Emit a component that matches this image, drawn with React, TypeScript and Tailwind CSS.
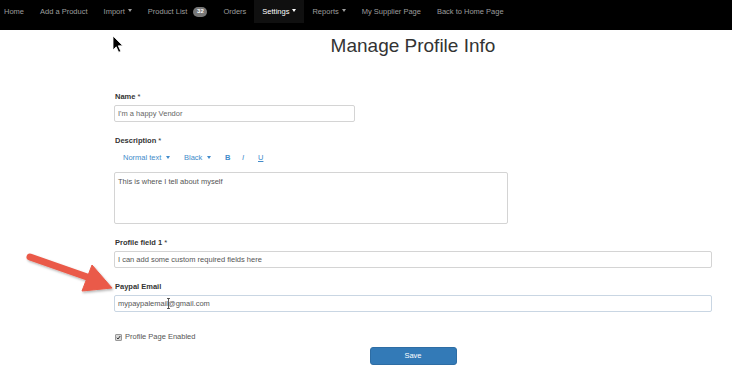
import React from "react";

const Caret = () => (
  <span className="inline-block w-0 h-0 border-t-[3px] border-t-current border-x-[2.5px] border-x-transparent align-middle ml-[3px] relative top-[-1px]" />
);

function NavItem({ children, active, first }: { children: React.ReactNode; active?: boolean; first?: boolean }) {
  return (
    <div
      className={
        "h-[23px] flex items-center " +
        (first ? "pl-[4px] pr-[8px] " : "px-[8px] ") +
        (active ? "bg-[#101010] text-white" : "text-[#9d9d9d]")
      }
    >
      {children}
    </div>
  );
}

function Label({ children, req }: { children: React.ReactNode; req?: boolean }) {
  return (
    <div className="h-[10px] leading-[10px] text-[7.5px] font-bold text-[#333] pl-[1px]">
      {children}
      {req && <span className="font-normal text-[#333]"> *</span>}
    </div>
  );
}

export default function App() {
  return (
    <div
      className="relative w-[732px] h-[378px] bg-white overflow-hidden"
      style={{ fontFamily: '"Liberation Sans", Arial, sans-serif' }}
    >
      {/* Navbar */}
      <nav className="h-[30px] bg-black flex items-start text-[7.5px]">
        <NavItem first>Home</NavItem>
        <NavItem>Add a Product</NavItem>
        <NavItem>
          Import <Caret />
        </NavItem>
        <NavItem>
          Product List
          <span className="ml-[6px] h-[10px] w-[14px] rounded-full bg-[#777] text-white text-[6px] font-bold flex items-center justify-center">
            32
          </span>
        </NavItem>
        <NavItem>Orders</NavItem>
        <NavItem active>
          Settings <Caret />
        </NavItem>
        <NavItem>
          Reports <Caret />
        </NavItem>
        <NavItem>My Supplier Page</NavItem>
        <NavItem>Back to Home Page</NavItem>
      </nav>

      {/* Form */}
      <div className="ml-[114px] w-[598px] flex flex-col">
        <h1 className="mt-[5px] h-[22px] leading-[22px] text-center text-[19px] text-[#333] font-normal">
          Manage Profile Info
        </h1>

        <div className="mt-[35px]">
          <Label req>Name</Label>
        </div>
        <div className="mt-[3px] w-[241px] h-[17px] border border-[#d4d4d4] rounded-[2px] flex items-center px-[3px] text-[7.5px] text-[#666]">
          I'm a happy Vendor
        </div>

        <div className="mt-[14px]">
          <Label req>Description</Label>
        </div>
        <div className="mt-[7px] h-[10px] flex items-center text-[7.5px] text-[#428bca] pl-[9px]">
          <span className="w-[61px]">
            Normal text <Caret />
          </span>
          <span className="w-[41px]">
            Black <Caret />
          </span>
          <span className="w-[17px] font-bold">B</span>
          <span className="w-[16px] italic">I</span>
          <span className="underline">U</span>
        </div>
        <div className="mt-[9px] w-[394px] h-[52px] border border-[#d4d4d4] rounded-[2px] px-[3px] pt-[3px] text-[7.5px] text-[#555]">
          This is where I tell about myself
        </div>

        <div className="mt-[14px]">
          <Label req>Profile field 1</Label>
        </div>
        <div className="mt-[3px] h-[17px] border border-[#d4d4d4] rounded-[2px] flex items-center px-[3px] text-[7.5px] text-[#555]">
          I can add some custom required fields here
        </div>

        <div className="mt-[14px]">
          <Label>Paypal Email</Label>
        </div>
        <div className="mt-[3px] h-[17px] border border-[#c9d6e3] rounded-[2px] flex items-center px-[3px] text-[7.5px] text-[#555]">
          mypaypalemail@gmail.com
        </div>

        <div className="mt-[20px] h-[10px] flex items-center text-[7.5px] text-[#555] pl-[1px]">
          <span className="w-[7px] h-[7px] bg-[#d8d8d8] border border-[#999] rounded-[1px] flex items-center justify-center mr-[3px]">
            <svg width="5" height="5" viewBox="0 0 10 10">
              <path d="M1.5 5.5 L4 8 L8.5 2" stroke="#333" strokeWidth="2" fill="none" />
            </svg>
          </span>
          Profile Page Enabled
        </div>

        <div className="mt-[5px] self-center w-[87px] h-[18px] bg-[#337ab7] border border-[#2e6da4] rounded-[3px] flex items-center justify-center text-white text-[7.5px]">
          Save
        </div>
      </div>

      {/* Red annotation arrow */}
      <svg className="absolute left-0 top-0 pointer-events-none" width="732" height="378">
        <defs>
          <filter id="sh" x="-20%" y="-20%" width="140%" height="140%">
            <feDropShadow dx="1" dy="1.5" stdDeviation="1.2" floodColor="#000" floodOpacity="0.3" />
          </filter>
        </defs>
        <g filter="url(#sh)" fill="#ea5a48" stroke="#ea5a48">
          <line x1="30" y1="257" x2="90" y2="278" strokeWidth="7" strokeLinecap="round" />
          <polygon points="112,288 92,265 82,291" strokeWidth="1" strokeLinejoin="round" />
        </g>
        {/* mouse cursor */}
        <path
          d="M113 36 L113 50 L116.2 46.8 L118.7 52.3 L120.8 51.3 L118.3 45.8 L122.8 45.8 Z"
          fill="#000"
          stroke="#fff"
          strokeWidth="0.8"
        />
        {/* text I-beam */}
        <path d="M168.5 298.5 L168.5 308.5 M167 298.5 L170 298.5 M167 308.5 L170 308.5" stroke="#333" strokeWidth="0.8" />
      </svg>
    </div>
  );
}
